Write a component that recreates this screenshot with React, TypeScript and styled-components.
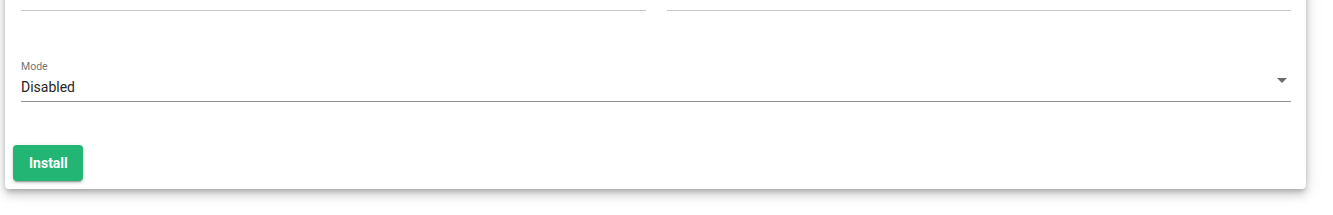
import React from 'react';
import styled, { createGlobalStyle } from 'styled-components';

const GlobalStyle = createGlobalStyle`
  html, body {
    margin: 0;
    padding: 0;
    background: #ffffff;
    font-family: Roboto, "Liberation Sans", Arial, sans-serif;
  }
`;

const Page = styled.div`
  padding: 0 27px 30px 5px;
  margin-top: -21px;
`;

const Card = styled.div`
  background: #ffffff;
  border-radius: 4px;
  padding: 0 8px 8px;
  box-shadow: 0 3px 5px -1px rgba(0, 0, 0, 0.2), 0 6px 10px 0 rgba(0, 0, 0, 0.14),
    0 1px 18px 0 rgba(0, 0, 0, 0.12);
`;

const Form = styled.div`
  display: flex;
  flex-direction: column;
  padding: 0 7px 0 8px;
`;

const Row = styled.div`
  display: grid;
  grid-template-columns: 1fr 1fr;
  column-gap: 21px;
`;

const Field = styled.div<{ $gap?: number }>`
  display: flex;
  flex-direction: column;
  margin-bottom: ${(p) => p.$gap ?? 0}px;
`;

const Label = styled.div`
  font-size: 10.5px;
  line-height: 14px;
  color: #757575;
  height: 14px;
`;

const Control = styled.div<{ $disabled?: boolean; $h?: number }>`
  display: flex;
  align-items: center;
  height: ${(p) => p.$h ?? 32}px;
  box-sizing: border-box;
  padding: 4px 0 6px;
  border-bottom: 1px solid ${(p) => (p.$disabled ? '#c6c6c6' : '#8f8f8f')};
`;

const Value = styled.div<{ $muted?: boolean }>`
  flex: 1;
  font-size: ${(p) => (p.$muted ? '12px' : '14px')};
  line-height: 20px;
  color: ${(p) => (p.$muted ? '#c4c4c4' : '#262626')};
`;

const Arrow = styled.svg`
  width: 24px;
  height: 24px;
  margin-right: -3px;
  margin-top: -14px;
  fill: #6b6b6b;
`;

const Actions = styled.div`
  display: flex;
  padding-top: 43px;
`;

const Button = styled.button`
  height: 36px;
  width: 70px;
  border: none;
  border-radius: 4px;
  background: #23b574;
  color: #ffffff;
  font-family: Roboto, "Liberation Sans", Arial, sans-serif;
  font-size: 14px;
  font-weight: 700;
  padding: 0 16px;
  box-shadow: 0 3px 1px -2px rgba(0, 0, 0, 0.2), 0 2px 2px 0 rgba(0, 0, 0, 0.14),
    0 1px 5px 0 rgba(0, 0, 0, 0.12);
  cursor: pointer;
`;

export default function App() {
  return (
    <>
      <GlobalStyle />
      <Page>
        <Card>
          <Form>
            <Row>
              <Field $gap={49}>
                <Control $disabled>
                  <Value $muted />
                </Control>
              </Field>
              <Field $gap={49}>
                <Control $disabled>
                  <Value $muted>None</Value>
                </Control>
              </Field>
            </Row>
            <Field>
              <Label>Mode</Label>
              <Control $h={28}>
                <Value>Disabled</Value>
                <Arrow viewBox="0 0 24 24">
                  <path d="M7 10l5 5 5-5z" />
                </Arrow>
              </Control>
            </Field>
          </Form>
          <Actions>
            <Button>Install</Button>
          </Actions>
        </Card>
      </Page>
    </>
  );
}
